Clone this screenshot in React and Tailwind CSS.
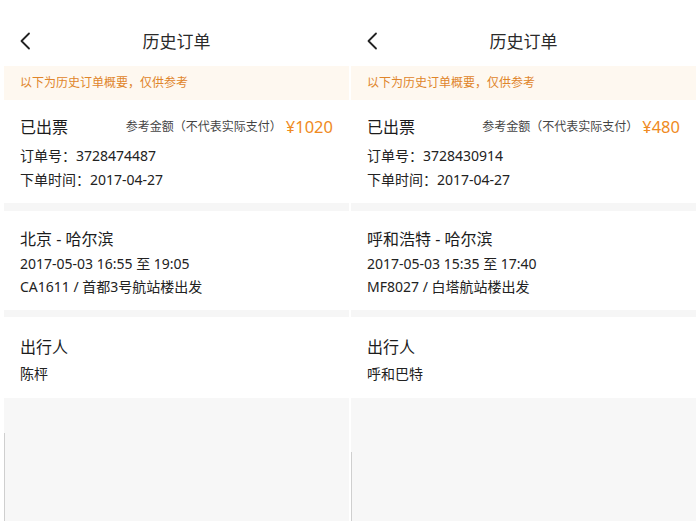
import React from 'react';

const orders = [
  {
    price: '¥1020',
    orderNo: '3728474487',
    date: '2017-04-27',
    route: '北京 - 哈尔滨',
    time: '2017-05-03 16:55 至 19:05',
    flight: 'CA1611 / 首都3号航站楼出发',
    passenger: '陈枰',
    lineTop: 'mt-[35px]',
  },
  {
    price: '¥480',
    orderNo: '3728430914',
    date: '2017-04-27',
    route: '呼和浩特 - 哈尔滨',
    time: '2017-05-03 15:35 至 17:40',
    flight: 'MF8027 / 白塔航站楼出发',
    passenger: '呼和巴特',
    lineTop: 'mt-[54px]',
  },
];

function BackIcon() {
  return (
    <svg width="12" height="18" viewBox="0 0 12 18" fill="none">
      <path d="M10 1.5 L2.5 9 L10 16.5" stroke="#222" strokeWidth="1.8" strokeLinecap="round" strokeLinejoin="round" />
    </svg>
  );
}

function Panel({ order }) {
  return (
    <div className="w-[345px] h-[521px] flex flex-col bg-white">
      {/* header */}
      <div className="h-[66px] pt-[17px] relative flex items-center justify-center">
        <div className="absolute left-[15px] top-[32px]">
          <BackIcon />
        </div>
        <span className="text-[17px] text-[#2a2a2a]">历史订单</span>
      </div>

      {/* notice */}
      <div className="h-[34px] bg-[#fef8f0] flex items-center px-4">
        <span className="text-[12px] text-[#e0852a]">以下为历史订单概要，仅供参考</span>
      </div>

      {/* order status */}
      <div className="pt-[15px] pb-[11px] px-4">
        <div className="flex items-center justify-between leading-6">
          <span className="text-[16px] text-[#1c1c1c]">已出票</span>
          <div className="flex items-center gap-[4px]">
            <span className="text-[12px] text-[#444]">参考金额（不代表实际支付）</span>
            <span className="text-[16.5px] text-[#ef8a22]">{order.price}</span>
          </div>
        </div>
        <div className="mt-[5px] text-[14px] text-[#222] leading-6">订单号：{order.orderNo}</div>
        <div className="text-[14px] text-[#222] leading-6">下单时间：{order.date}</div>
      </div>

      <div className="h-[8px] bg-[#f6f6f6]" />

      {/* flight */}
      <div className="pt-[16px] pb-[12px] px-4">
        <div className="text-[16px] text-[#1c1c1c] leading-6">{order.route}</div>
        <div className="mt-[1px] text-[14px] text-[#222] leading-[23px]">{order.time}</div>
        <div className="text-[14px] text-[#222] leading-[23px]">{order.flight}</div>
      </div>

      <div className="h-[7px] bg-[#f6f6f6]" />

      {/* passenger */}
      <div className="pt-[18px] pb-[12px] px-4">
        <div className="text-[16px] text-[#1c1c1c] leading-6">出行人</div>
        <div className="mt-[3px] text-[14px] text-[#222] leading-6">{order.passenger}</div>
      </div>

      <div className="flex-1 bg-[#f7f7f7] flex">
        <div className={`w-[1px] bg-[#cfcfcf] ${order.lineTop}`} />
      </div>
    </div>
  );
}

export default function App() {
  return (
    <div
      className="w-[700px] h-[524px] bg-white flex gap-[2px] pl-[4px]"
      style={{ fontFamily: '"Noto Sans", "Noto Sans CJK SC", sans-serif' }}
    >
      {orders.map((o) => (
        <Panel key={o.orderNo} order={o} />
      ))}
    </div>
  );
}
